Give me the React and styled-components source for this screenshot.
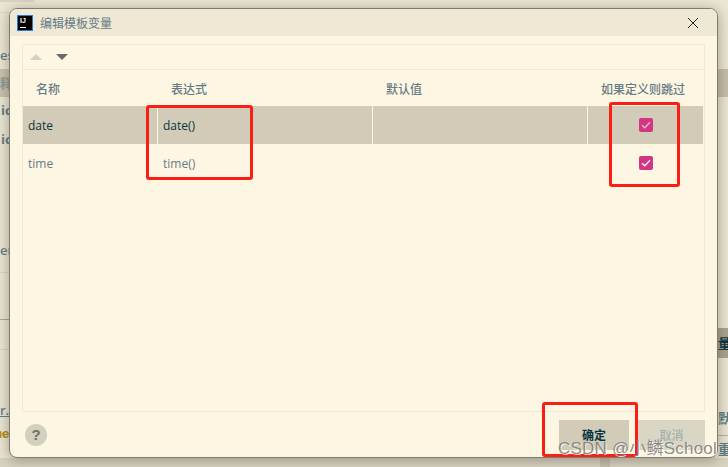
import React from 'react';
import styled, { createGlobalStyle } from 'styled-components';

const Global = createGlobalStyle`
  html, body { margin: 0; padding: 0; width: 728px; height: 467px; overflow: hidden; }
  #root { width: 728px; height: 467px; }
`;
const FONT = `"Noto Sans CJK SC", "Liberation Sans", sans-serif`;
const LATIN = `"Open Sans", "Noto Sans CJK SC", sans-serif`;

const Desktop = styled.div`
  position: relative;
  width: 728px;
  height: 467px;
  overflow: hidden;
  background: #ebe6d5;
  font-family: ${FONT};
`;
const BackStrip = styled.div`
  position: absolute;
  left: ${p => p.$x}px;
  top: ${p => p.$y}px;
  width: ${p => p.$w}px;
  height: ${p => p.$h}px;
  background: ${p => p.$c};
`;
const BackText = styled.span`
  position: absolute;
  left: ${p => p.$x}px;
  top: ${p => p.$y}px;
  font: ${p => p.$bold ? 'bold ' : '600 '}13px ${p => p.$mono ? '"Liberation Mono", monospace' : LATIN};
  color: ${p => p.$c || '#5f7f86'};
  text-decoration: ${p => p.$link ? 'underline' : 'none'};
  line-height: 14px;
  white-space: nowrap;
`;
const Dialog = styled.div`
  position: absolute;
  left: 9px;
  top: 8px;
  width: 709px;
  height: 450px;
  box-sizing: border-box;
  display: flex;
  flex-direction: column;
  background: #fdf6e3;
  border: 1px solid #7f7b72;
  border-radius: 8px;
  box-shadow: 0 2px 14px rgba(60, 50, 30, 0.42);
  overflow: hidden;
`;
const TitleBar = styled.div`
  height: 27px;
  flex: none;
  display: flex;
  align-items: center;
  padding: 0 18px 0 7px;
  gap: 7px;
  background: #eee8d5;
`;
const Logo = styled.div`
  width: 16px;
  height: 16px;
  box-sizing: border-box;
  background: #000;
  border: 1px solid #1f7fd8;
  color: #fff;
  position: relative;
  font: bold 7px/8px "Liberation Sans", sans-serif;
  padding: 1px 0 0 2px;
  &::after {
    content: '';
    position: absolute;
    left: 2px;
    bottom: 2px;
    width: 6px;
    height: 1px;
    background: #fff;
  }
`;
const Title = styled.span`
  flex: 1;
  font-size: 12px;
  color: #657b83;
`;
const Close = styled.svg`
  width: 12px;
  height: 12px;
  display: block;
`;
const Body = styled.div`
  flex: 1;
  display: flex;
  flex-direction: column;
  padding: 8px 12px 0 12px;
  min-height: 0;
`;
const TablePanel = styled.div`
  flex: 1;
  min-height: 0;
  box-sizing: border-box;
  border: 1px solid #eee8d5;
  display: flex;
  flex-direction: column;
`;
const Toolbar = styled.div`
  height: 25px;
  box-sizing: border-box;
  flex: none;
  display: flex;
  align-items: center;
  padding-left: 6px;
  gap: 12px;
  border-bottom: 1px solid #eee8d5;
`;
const Arrow = styled.svg`
  width: 14px;
  height: 8px;
  display: block;
`;
const HeadRow = styled.div`
  display: grid;
  grid-template-columns: 134px 215px 215px 116px;
  height: 36px;
  flex: none;
  align-items: center;
`;
const HeadCell = styled.div`
  font-size: 12px;
  font-weight: 500;
  color: #657b83;
  padding-left: ${p => p.$pad || 0}px;
  white-space: nowrap;
`;
const Row = styled.div`
  display: grid;
  grid-template-columns: 134px 215px 215px 116px;
  height: 38px;
  flex: none;
  background: ${p => p.$selected ? '#d2cbb7' : 'transparent'};
  color: ${p => p.$selected ? '#073642' : '#657b83'};
  width: 680px;
`;
const Cell = styled.div`
  font: 12px ${LATIN};
  display: flex;
  align-items: center;
  padding-left: 5px;
  box-sizing: border-box;
  border-left: 1px solid ${p => p.$sep ? '#fdf6e3' : 'transparent'};
`;
const FirstCell = styled(Cell)`
  border-left: none;
`;
const CheckCell = styled(Cell)`
  justify-content: center;
  padding-left: 1px;
  padding-right: 1px;
`;
const Check = styled.div`
  width: 14px;
  height: 14px;
  border-radius: 2px;
  background: #d33682;
  display: flex;
  align-items: center;
  justify-content: center;
`;
const Footer = styled.div`
  height: 45px;
  flex: none;
  display: flex;
  align-items: center;
  justify-content: space-between;
  padding: 0 12px 0 15px;
`;
const Help = styled.div`
  width: 22px;
  height: 22px;
  border-radius: 50%;
  background: #d2cfbd;
  color: #6f7068;
  font: bold 15px/22px "Liberation Sans", sans-serif;
  text-align: center;
`;
const Buttons = styled.div`
  display: flex;
  gap: 9px;
  align-self: flex-end;
  margin-bottom: 7px;
`;
const Button = styled.div`
  width: ${p => p.$primary ? 70 : 67}px;
  height: 30px;
  box-sizing: border-box;
  padding-bottom: 2px;
  display: flex;
  align-items: center;
  justify-content: center;
  font-size: 12px;
  font-weight: ${p => p.$primary ? 700 : 500};
  background: ${p => p.$primary ? '#d2cbb7' : '#d9d6c5'};
  color: ${p => p.$primary ? '#073642' : '#a4b0ae'};
`;
const Mark = styled.div`
  position: absolute;
  left: ${p => p.$x}px;
  top: ${p => p.$y}px;
  width: ${p => p.$w}px;
  height: ${p => p.$h}px;
  box-sizing: border-box;
  border: 3px solid #fa1e14;
  border-radius: 3px;
`;
const Watermark = styled.div`
  position: absolute;
  left: 558px;
  top: 438px;
  font: 17px/22px "Liberation Sans", "Noto Sans CJK SC", sans-serif;
  letter-spacing: 0.2px;
  color: rgba(120, 120, 115, 0.85);
  text-shadow: 1px 1px 0 rgba(255, 255, 255, 0.75);
  white-space: nowrap;
`;

const Tick = ({ $dim }) => (
  <svg width="10" height="8" viewBox="0 0 10 8">
    <path d="M1 4.2 L3.8 6.8 L9 1.2" fill="none" stroke={$dim ? '#e3bccb' : '#fdf0ee'} strokeWidth="1.4" />
  </svg>
);

const rows = [
  { name: 'date', expr: 'date()', selected: true },
  { name: 'time', expr: 'time()', selected: false },
];

export default function App() {
  return (
    <Desktop>
      <Global />
      <BackStrip $x={0} $y={0} $w={34} $h={2} $c="#d9d4c2" />
      <BackStrip $x={0} $y={12} $w={10} $h={1} $c="#ded9c8" />
      <BackStrip $x={0} $y={69} $w={9} $h={28} $c="#c8c2ae" />
      <BackStrip $x={718} $y={69} $w={10} $h={28} $c="#c6bfac" />
      <BackStrip $x={0} $y={272} $w={9} $h={1} $c="#d8d4c3" />
      <BackStrip $x={0} $y={319} $w={9} $h={1} $c="#aaa698" />
      <BackStrip $x={0} $y={349} $w={9} $h={1} $c="#d8d4c3" />
      <BackStrip $x={718} $y={328} $w={10} $h={30} $c="#a8a493" />
      <BackStrip $x={718} $y={435} $w={10} $h={1} $c="#b8b4a5" />
      <BackStrip $x={0} $y={458} $w={728} $h={9} $c="#d8d3c2" />
      <BackStrip $x={600} $y={458} $w={10} $h={9} $c="#c4bfae" />
      <BackText $x={0} $y={48}>es</BackText>
      <BackText $x={0} $y={76} $c="#8f9a98">释)</BackText>
      <BackText $x={1} $y={103} $bold>ic</BackText>
      <BackText $x={1} $y={132} $bold>ic</BackText>
      <BackText $x={0} $y={243}>er</BackText>
      <BackText $x={0} $y={403} $link>r.i</BackText>
      <BackText $x={-6} $y={428} $c="#b58900" $bold $mono>me</BackText>
      <BackText $x={718} $y={336} $c="#073642">量</BackText>
      <BackText $x={718} $y={411}>默</BackText>
      <BackText $x={718} $y={442}>重</BackText>
      <Dialog>
        <TitleBar>
          <Logo>IJ</Logo>
          <Title>编辑模板变量</Title>
          <Close viewBox="0 0 12 12">
            <path d="M1 1 L11 11 M11 1 L1 11" stroke="#222" strokeWidth="1" fill="none" />
          </Close>
        </TitleBar>
        <Body>
          <TablePanel>
            <Toolbar>
              <Arrow viewBox="0 0 14 8"><path d="M1 7 L7 1 L13 7 Z" fill="#d2d0c6" /></Arrow>
              <Arrow viewBox="0 0 14 8"><path d="M1 1 L13 1 L7 7 Z" fill="#6b6b66" /></Arrow>
            </Toolbar>
            <HeadRow>
              <HeadCell $pad={13}>名称</HeadCell>
              <HeadCell $pad={14}>表达式</HeadCell>
              <HeadCell $pad={14}>默认值</HeadCell>
              <HeadCell $pad={14}>如果定义则跳过</HeadCell>
            </HeadRow>
            {rows.map(r => (
              <Row key={r.name} $selected={r.selected}>
                <FirstCell>{r.name}</FirstCell>
                <Cell $sep={r.selected}>{r.expr}</Cell>
                <Cell $sep={r.selected} />
                <CheckCell $sep={r.selected}><Check><Tick $dim={r.selected} /></Check></CheckCell>
              </Row>
            ))}
          </TablePanel>
        </Body>
        <Footer>
          <Help>?</Help>
          <Buttons>
            <Button $primary>确定</Button>
            <Button>取消</Button>
          </Buttons>
        </Footer>
      </Dialog>
      <Mark $x={146} $y={105} $w={107} $h={75} />
      <Mark $x={609} $y={102} $w={71} $h={85} />
      <Mark $x={542} $y={402} $w={96} $h={55} />
      <Watermark>CSDN @小鳞School</Watermark>
    </Desktop>
  );
}
